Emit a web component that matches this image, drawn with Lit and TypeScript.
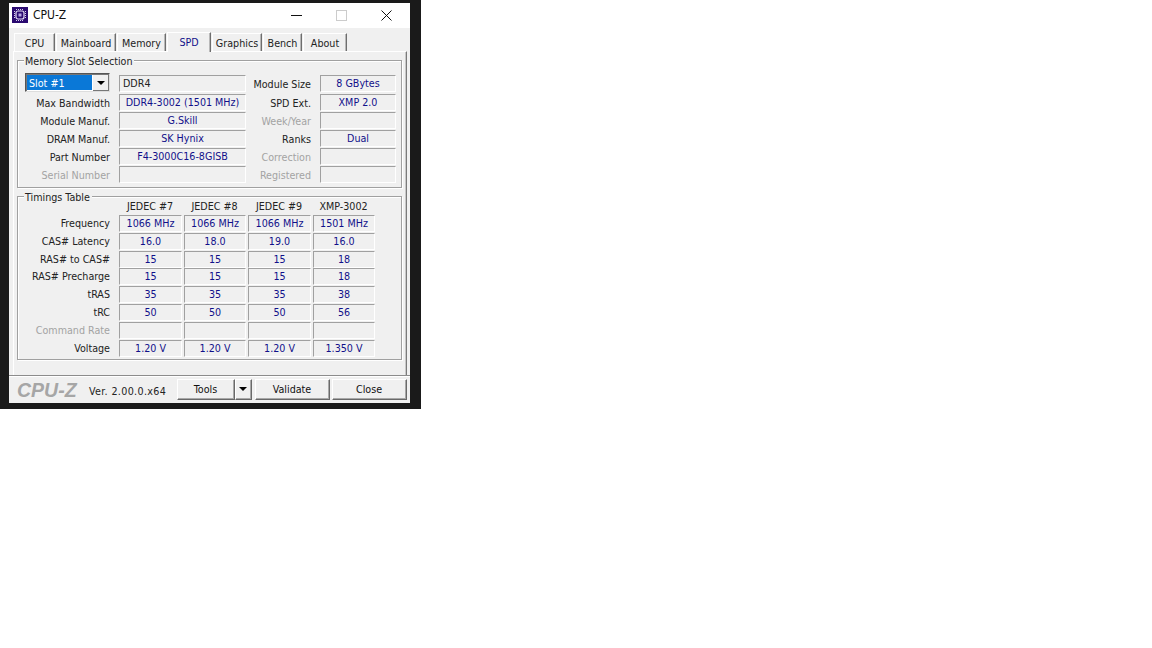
import { LitElement, html, css, nothing } from "lit";
import { customElement } from "lit/decorators.js";

type Row = [string, string, boolean?];
const left: Row[] = [
  ["Max Bandwidth", "DDR4-3002 (1501 MHz)"],
  ["Module Manuf.", "G.Skill"],
  ["DRAM Manuf.", "SK Hynix"],
  ["Part Number", "F4-3000C16-8GISB"],
  ["Serial Number", "", true],
];
const right: Row[] = [
  ["Module Size", "8 GBytes"],
  ["SPD Ext.", "XMP 2.0"],
  ["Week/Year", "", true],
  ["Ranks", "Dual"],
  ["Correction", "", true],
  ["Registered", "", true],
];
const timings: [string, string[], boolean?][] = [
  ["Frequency", ["1066 MHz", "1066 MHz", "1066 MHz", "1501 MHz"]],
  ["CAS# Latency", ["16.0", "18.0", "19.0", "16.0"]],
  ["RAS# to CAS#", ["15", "15", "15", "18"]],
  ["RAS# Precharge", ["15", "15", "15", "18"]],
  ["tRAS", ["35", "35", "35", "38"]],
  ["tRC", ["50", "50", "50", "56"]],
  ["Command Rate", ["", "", "", ""], true],
  ["Voltage", ["1.20 V", "1.20 V", "1.20 V", "1.350 V"]],
];
const tabs = ["CPU", "Mainboard", "Memory", "SPD", "Graphics", "Bench", "About"];
const tabW = [41, 60, 49, 44, 50, 39, 44];

@customElement("app-root")
export class AppRoot extends LitElement {
  static styles = css`
    :host { display: block; width: 1152px; height: 648px; background: #fff; font-family: "DejaVu Sans Condensed", "DejaVu Sans", "Liberation Sans", sans-serif; font-stretch: condensed; font-size: 10.65px; color: #1c1c1c; line-height: 1; }
    * { box-sizing: border-box; }
    .frame { width: 421px; height: 409px; background: #1a1a1a; padding: 3px 11px 6px 9px; }
    .win { width: 401px; height: 400px; background: #f0f0f0; display: flex; flex-direction: column; }
    .title { height: 25px; background: #fff; display: flex; align-items: center; flex: none; padding-left: 3px; padding-bottom: 1px; }
    .title svg.logo { width: 16px; height: 16px; flex: none; }
    .title .name { margin-left: 5px; font-size: 12px; color: #111; width: 241px; }
    .winbtn { width: 45px; display: flex; justify-content: center; align-items: center; flex: none; }
    .body { flex: 1; display: flex; flex-direction: column; padding: 3px 3px 0 4px; min-height: 0; }
    .tabs { display: flex; height: 20px; padding-left: 1px; align-items: flex-end; flex: none; }
    .tab { height: 18px; padding-top: 4px; margin-right: 1px; border-top: 1px solid #fff; border-left: 1px solid #fff; border-right: 1px solid #6e6e6e; display: flex; align-items: center; justify-content: center; background: #f0f0f0; color: #222; box-shadow: inset -1px 0 0 #b8b8b8; }
    .tab.active { height: 20px; color: #10108a; margin-bottom: -1px; position: relative; z-index: 1; padding: 2px 0 0; }
    .page { height: 324px; flex: none; border-top: 1px solid #fff; border-left: 1px solid #fff; border-right: 1px solid #7a7a7a; padding: 2px 4px 0 3px; display: flex; flex-direction: column; gap: 2px; box-shadow: inset -1px 0 0 #c8c8c8; }
    fieldset { margin: 0; padding: 0 0 0 7px; border: 1px solid #a0a0a0; box-shadow: 1px 1px 0 #fff, inset 1px 1px 0 #fff; width: 385px; flex: none; display: block; min-width: 0; }
    legend { padding: 2px 2px 0 1px; margin-left: -1px; background: #f0f0f0; height: 13px; line-height: 12px; color: #222; }
    fieldset.slot { height: 134px; }
    fieldset.tim { height: 170px; }
    .slotgrid { display: grid; grid-template-columns: 94px 127px 74px 76px; grid-template-rows: 19px; grid-auto-rows: 18px; margin-top: 8px; }
    .cell { height: 17px; }
    .lbl { text-align: right; padding-right: 9px; padding-top: 1px; height: 17px; line-height: 17px; white-space: nowrap; color: #222; }
    .lbl.off { color: #a3a3a3; }
    .fld { height: 17px; border-top: 1px solid #a0a0a0; border-left: 1px solid #a0a0a0; border-right: 1px solid #fff; border-bottom: 1px solid #fff; color: #10108a; text-align: center; line-height: 15px; white-space: nowrap; overflow: hidden; }
    .fld.start { text-align: left; padding-left: 3px; color: #222; }
    .combo { width: 85px; height: 19px; margin-top: -2px; border: 1px solid #555; border-right-color: #ddd; border-bottom-color: #ddd; background: #fff; padding: 1px 0 1px 1px; display: flex; box-shadow: inset 1px 1px 0 #777; }
    .combo .sel { flex: 1; background: #0a78d7; color: #fff; line-height: 17px; padding-left: 2px; height: 15px; margin-right: 1px; }
    .combo .arrow { width: 16px; height: 16px; background: #f0f0f0; border-right: 1px solid #777; border-bottom: 1px solid #777; display: flex; align-items: center; justify-content: center; }
    .tri { width: 0; height: 0; border-left: 4px solid transparent; border-right: 4px solid transparent; border-top: 4px solid #000; }
    .timgrid { display: grid; grid-template-columns: 94px 65px 64px 65px 64px; grid-template-rows: 16px; grid-auto-rows: 17.8px; margin-top: -4px; }
    .hd { text-align: center; height: 14px; padding-top: 1px; line-height: 14px; padding-right: 3px; color: #222; white-space: nowrap; }
    .timgrid .fld { margin-right: 2px; }
    .timgrid .lbl { padding-top: 0; }
    .foot { height: 28px; flex: none; border-top: 1px solid #8c8c8c; display: flex; align-items: flex-start; padding: 3px 0 0 8px; box-shadow: inset 0 1px 0 #fff; }
    .brand { font-family: "Liberation Sans", Arial, sans-serif; font-style: italic; font-weight: bold; font-size: 19.5px; color: #a6a6a6; width: 72px; padding-top: 2px; }
    .ver { width: 88px; color: #222; padding-top: 8px; letter-spacing: 0.35px; white-space: nowrap; }
    .btn { height: 21px; background: #f0f0f0; border-top: 1px solid #fff; border-left: 1px solid #fff; border-right: 1px solid #696969; border-bottom: 1px solid #696969; box-shadow: inset -1px -1px 0 #a8a8a8; display: flex; align-items: center; justify-content: center; color: #111; padding: 2px 1px 0 0; }
    .tools { width: 58px; }
    .toolsarrow { width: 17px; margin-right: 3px; padding: 0 2px 2px 0; }
    .validate { width: 75px; margin-right: 2px; }
    .close { width: 75px; }
  `;

  private slotRow(i: number) {
    const [rl, rv, roff] = right[i];
    const l = i === 0 ? null : left[i - 1];
    return html`
      ${l === null
        ? html`<div class="cell"><div class="combo"><div class="sel">Slot #1</div><div class="arrow"><div class="tri"></div></div></div></div>
               <div class="fld start">DDR4</div>`
        : html`<div class="lbl ${l[2] ? "off" : ""}">${l[0]}</div><div class="fld">${l[1]}</div>`}
      <div class="lbl ${roff ? "off" : ""}">${rl}</div>
      <div class="fld">${rv}</div>`;
  }

  render() {
    return html`
      <div class="frame"><div class="win">
        <div class="title">
          <svg class="logo" viewBox="0 0 16 16">
            <rect width="16" height="16" fill="#2b0a70"/>
            <rect x="4" y="4" width="8" height="8" rx="2" fill="none" stroke="#e6e0f5" stroke-width="1.2"/>
            <rect x="6.5" y="6.5" width="3" height="3" fill="#b9a8e6"/>
            <path d="M4 2.5h8M4 13.5h8M2.5 4v8M13.5 4v8" stroke="#d8cff0" stroke-dasharray="1 1" fill="none"/>
          </svg>
          <span class="name">CPU-Z</span>
          <div class="winbtn"><svg width="11" height="11"><path d="M0 5.5h11" stroke="#111"/></svg></div>
          <div class="winbtn"><svg width="11" height="11"><rect x=".5" y=".5" width="10" height="10" fill="none" stroke="#ccc"/></svg></div>
          <div class="winbtn"><svg width="11" height="11"><path d="M.5 .5l10 10M10.5 .5l-10 10" stroke="#111" fill="none"/></svg></div>
        </div>
        <div class="body">
          <div class="tabs">
            ${tabs.map((t, i) => html`<div class="tab ${t === "SPD" ? "active" : ""}" style="width:${tabW[i]}px">${t}</div>`)}
          </div>
          <div class="page">
            <fieldset class="slot">
              <legend>Memory Slot Selection</legend>
              <div class="slotgrid">
                ${right.map((_, i) => this.slotRow(i))}
              </div>
            </fieldset>
            <fieldset class="tim">
              <legend>Timings Table</legend>
              <div class="timgrid">
                <div></div>
                ${["JEDEC #7", "JEDEC #8", "JEDEC #9", "XMP-3002"].map((h) => html`<div class="hd">${h}</div>`)}
                ${timings.map(([l, vals, off]) => html`
                  <div class="lbl ${off ? "off" : ""}">${l}</div>
                  ${vals.map((v) => html`<div class="fld">${v || nothing}</div>`)}
                `)}
              </div>
            </fieldset>
          </div>
        </div>
        <div class="foot">
          <div class="brand">CPU-Z</div>
          <div class="ver">Ver. 2.00.0.x64</div>
          <div class="btn tools">Tools</div>
          <div class="btn toolsarrow"><div class="tri"></div></div>
          <div class="btn validate">Validate</div>
          <div class="btn close">Close</div>
        </div>
      </div></div>`;
  }
}
